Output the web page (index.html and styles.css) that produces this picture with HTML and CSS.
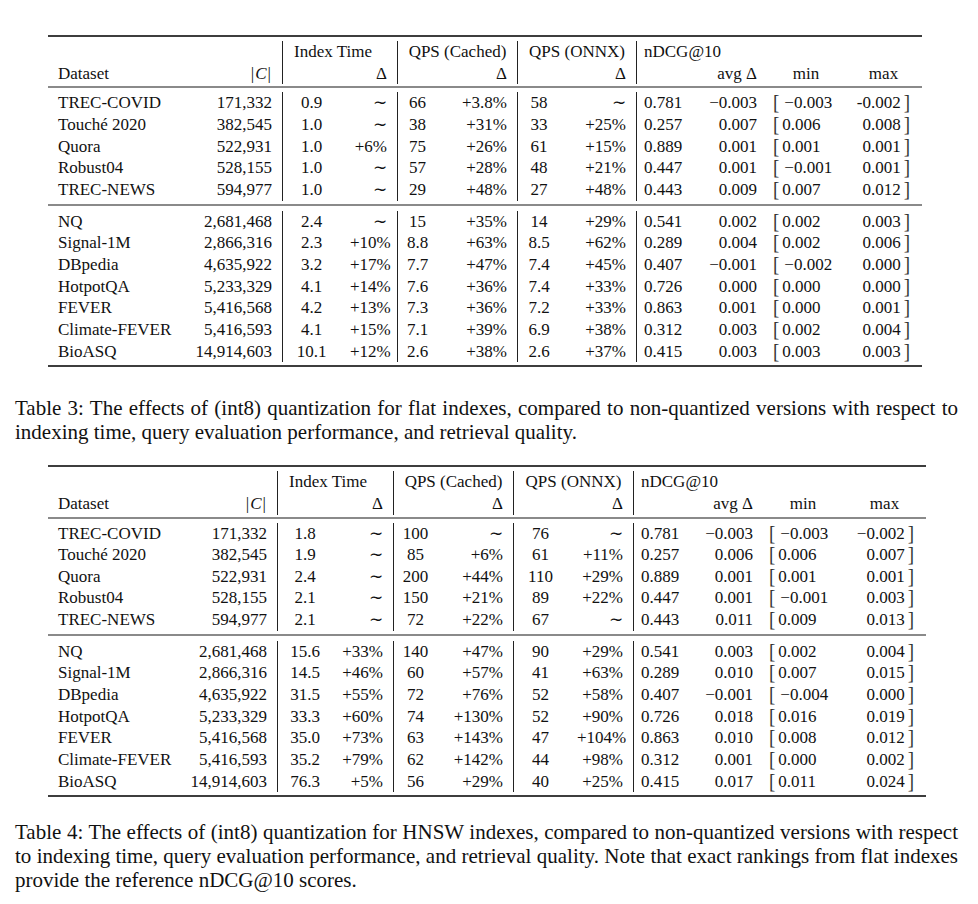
FILE: index.html
```html
<!DOCTYPE html>
<html>
<head>
<meta charset="utf-8">
<link rel="stylesheet" href="styles.css">
</head>
<body>
<div class="page">

<table class="qt t3">
  <colgroup>
    <col style="width:127px"><col style="width:107px">
    <col style="width:58px"><col style="width:57px">
    <col style="width:40px"><col style="width:80px">
    <col style="width:43px"><col style="width:76px">
    <col style="width:61px"><col style="width:70px"><col style="width:78px"><col style="width:77px">
  </colgroup>
  <tbody>
    <tr class="rule"><td colspan="12"><div class="line top"></div></td></tr>
    <tr class="hd">
      <td></td><td></td>
      <td colspan="2" class="vl grp-l">Index Time</td>
      <td colspan="2" class="vl c">QPS (Cached)</td>
      <td colspan="2" class="vl c">QPS (ONNX)</td>
      <td colspan="4" class="vl ndcg">nDCG@10</td>
    </tr>
    <tr class="hd">
      <td class="name">Dataset</td><td class="r"><span class="bar">|</span><i>C</i><span class="bar">|</span></td>
      <td class="vl"></td><td class="r">Δ</td>
      <td class="vl"></td><td class="r">Δ</td>
      <td class="vl"></td><td class="r">Δ</td>
      <td class="vl"></td><td class="r">avg Δ</td><td class="c">min</td><td class="c">max</td>
    </tr>
    <tr class="rule"><td colspan="12"><div class="line mid"></div></td></tr>

    <tr><td class="name">TREC-COVID</td><td class="r">171,332</td><td class="vl c">0.9</td><td class="r">∼</td><td class="vl c">66</td><td class="r">+3.8%</td><td class="vl c">58</td><td class="r">∼</td><td class="vl nv">0.781</td><td class="r">−0.003</td><td class="mn"><span class="br">[</span><span class="neg">−0.003</span></td><td class="mx">-0.002<span class="br rb">]</span></td></tr>
    <tr><td class="name">Touché 2020</td><td class="r">382,545</td><td class="vl c">1.0</td><td class="r">∼</td><td class="vl c">38</td><td class="r">+31%</td><td class="vl c">33</td><td class="r">+25%</td><td class="vl nv">0.257</td><td class="r">0.007</td><td class="mn"><span class="br">[</span>0.006</td><td class="mx">0.008<span class="br rb">]</span></td></tr>
    <tr><td class="name">Quora</td><td class="r">522,931</td><td class="vl c">1.0</td><td class="r">+6%</td><td class="vl c">75</td><td class="r">+26%</td><td class="vl c">61</td><td class="r">+15%</td><td class="vl nv">0.889</td><td class="r">0.001</td><td class="mn"><span class="br">[</span>0.001</td><td class="mx">0.001<span class="br rb">]</span></td></tr>
    <tr><td class="name">Robust04</td><td class="r">528,155</td><td class="vl c">1.0</td><td class="r">∼</td><td class="vl c">57</td><td class="r">+28%</td><td class="vl c">48</td><td class="r">+21%</td><td class="vl nv">0.447</td><td class="r">0.001</td><td class="mn"><span class="br">[</span><span class="neg">−0.001</span></td><td class="mx">0.001<span class="br rb">]</span></td></tr>
    <tr><td class="name">TREC-NEWS</td><td class="r">594,977</td><td class="vl c">1.0</td><td class="r">∼</td><td class="vl c">29</td><td class="r">+48%</td><td class="vl c">27</td><td class="r">+48%</td><td class="vl nv">0.443</td><td class="r">0.009</td><td class="mn"><span class="br">[</span>0.007</td><td class="mx">0.012<span class="br rb">]</span></td></tr>

    <tr class="rule"><td colspan="12"><div class="line mid2"></div></td></tr>

    <tr><td class="name">NQ</td><td class="r">2,681,468</td><td class="vl c">2.4</td><td class="r">∼</td><td class="vl c">15</td><td class="r">+35%</td><td class="vl c">14</td><td class="r">+29%</td><td class="vl nv">0.541</td><td class="r">0.002</td><td class="mn"><span class="br">[</span>0.002</td><td class="mx">0.003<span class="br rb">]</span></td></tr>
    <tr><td class="name">Signal-1M</td><td class="r">2,866,316</td><td class="vl c">2.3</td><td class="r">+10%</td><td class="vl c">8.8</td><td class="r">+63%</td><td class="vl c">8.5</td><td class="r">+62%</td><td class="vl nv">0.289</td><td class="r">0.004</td><td class="mn"><span class="br">[</span>0.002</td><td class="mx">0.006<span class="br rb">]</span></td></tr>
    <tr><td class="name">DBpedia</td><td class="r">4,635,922</td><td class="vl c">3.2</td><td class="r">+17%</td><td class="vl c">7.7</td><td class="r">+47%</td><td class="vl c">7.4</td><td class="r">+45%</td><td class="vl nv">0.407</td><td class="r">−0.001</td><td class="mn"><span class="br">[</span><span class="neg">−0.002</span></td><td class="mx">0.000<span class="br rb">]</span></td></tr>
    <tr><td class="name">HotpotQA</td><td class="r">5,233,329</td><td class="vl c">4.1</td><td class="r">+14%</td><td class="vl c">7.6</td><td class="r">+36%</td><td class="vl c">7.4</td><td class="r">+33%</td><td class="vl nv">0.726</td><td class="r">0.000</td><td class="mn"><span class="br">[</span>0.000</td><td class="mx">0.000<span class="br rb">]</span></td></tr>
    <tr><td class="name">FEVER</td><td class="r">5,416,568</td><td class="vl c">4.2</td><td class="r">+13%</td><td class="vl c">7.3</td><td class="r">+36%</td><td class="vl c">7.2</td><td class="r">+33%</td><td class="vl nv">0.863</td><td class="r">0.001</td><td class="mn"><span class="br">[</span>0.000</td><td class="mx">0.001<span class="br rb">]</span></td></tr>
    <tr><td class="name">Climate-FEVER</td><td class="r">5,416,593</td><td class="vl c">4.1</td><td class="r">+15%</td><td class="vl c">7.1</td><td class="r">+39%</td><td class="vl c">6.9</td><td class="r">+38%</td><td class="vl nv">0.312</td><td class="r">0.003</td><td class="mn"><span class="br">[</span>0.002</td><td class="mx">0.004<span class="br rb">]</span></td></tr>
    <tr><td class="name">BioASQ</td><td class="r">14,914,603</td><td class="vl c">10.1</td><td class="r">+12%</td><td class="vl c">2.6</td><td class="r">+38%</td><td class="vl c">2.6</td><td class="r">+37%</td><td class="vl nv">0.415</td><td class="r">0.003</td><td class="mn"><span class="br">[</span>0.003</td><td class="mx">0.003<span class="br rb">]</span></td></tr>

    <tr class="rule"><td colspan="12"><div class="line bottom"></div></td></tr>
  </tbody>
</table>

<p class="caption cap3">Table 3: The effects of (int8) quantization for flat indexes, compared to non-quantized versions with respect to indexing time, query evaluation performance, and retrieval quality.</p>

<table class="qt t4">
  <colgroup>
    <col style="width:122px"><col style="width:107px">
    <col style="width:55px"><col style="width:61px">
    <col style="width:44px"><col style="width:76px">
    <col style="width:54px"><col style="width:66px">
    <col style="width:62px"><col style="width:68px"><col style="width:80px"><col style="width:83px">
  </colgroup>
  <tbody>
    <tr class="rule"><td colspan="12"><div class="line top"></div></td></tr>
    <tr class="hd">
      <td></td><td></td>
      <td colspan="2" class="vl grp-l">Index Time</td>
      <td colspan="2" class="vl c">QPS (Cached)</td>
      <td colspan="2" class="vl c">QPS (ONNX)</td>
      <td colspan="4" class="vl ndcg">nDCG@10</td>
    </tr>
    <tr class="hd">
      <td class="name">Dataset</td><td class="r"><span class="bar">|</span><i>C</i><span class="bar">|</span></td>
      <td class="vl"></td><td class="r">Δ</td>
      <td class="vl"></td><td class="r">Δ</td>
      <td class="vl"></td><td class="r">Δ</td>
      <td class="vl"></td><td class="r">avg Δ</td><td class="c">min</td><td class="c">max</td>
    </tr>
    <tr class="rule"><td colspan="12"><div class="line mid"></div></td></tr>

    <tr><td class="name">TREC-COVID</td><td class="r">171,332</td><td class="vl c">1.8</td><td class="r">∼</td><td class="vl c">100</td><td class="r">∼</td><td class="vl c">76</td><td class="r">∼</td><td class="vl nv">0.781</td><td class="r">−0.003</td><td class="mn"><span class="br">[</span><span class="neg">−0.003</span></td><td class="mx">−0.002<span class="br rb">]</span></td></tr>
    <tr><td class="name">Touché 2020</td><td class="r">382,545</td><td class="vl c">1.9</td><td class="r">∼</td><td class="vl c">85</td><td class="r">+6%</td><td class="vl c">61</td><td class="r">+11%</td><td class="vl nv">0.257</td><td class="r">0.006</td><td class="mn"><span class="br">[</span>0.006</td><td class="mx">0.007<span class="br rb">]</span></td></tr>
    <tr><td class="name">Quora</td><td class="r">522,931</td><td class="vl c">2.4</td><td class="r">∼</td><td class="vl c">200</td><td class="r">+44%</td><td class="vl c">110</td><td class="r">+29%</td><td class="vl nv">0.889</td><td class="r">0.001</td><td class="mn"><span class="br">[</span>0.001</td><td class="mx">0.001<span class="br rb">]</span></td></tr>
    <tr><td class="name">Robust04</td><td class="r">528,155</td><td class="vl c">2.1</td><td class="r">∼</td><td class="vl c">150</td><td class="r">+21%</td><td class="vl c">89</td><td class="r">+22%</td><td class="vl nv">0.447</td><td class="r">0.001</td><td class="mn"><span class="br">[</span><span class="neg">−0.001</span></td><td class="mx">0.003<span class="br rb">]</span></td></tr>
    <tr><td class="name">TREC-NEWS</td><td class="r">594,977</td><td class="vl c">2.1</td><td class="r">∼</td><td class="vl c">72</td><td class="r">+22%</td><td class="vl c">67</td><td class="r">∼</td><td class="vl nv">0.443</td><td class="r">0.011</td><td class="mn"><span class="br">[</span>0.009</td><td class="mx">0.013<span class="br rb">]</span></td></tr>

    <tr class="rule"><td colspan="12"><div class="line mid2"></div></td></tr>

    <tr><td class="name">NQ</td><td class="r">2,681,468</td><td class="vl c">15.6</td><td class="r">+33%</td><td class="vl c">140</td><td class="r">+47%</td><td class="vl c">90</td><td class="r">+29%</td><td class="vl nv">0.541</td><td class="r">0.003</td><td class="mn"><span class="br">[</span>0.002</td><td class="mx">0.004<span class="br rb">]</span></td></tr>
    <tr><td class="name">Signal-1M</td><td class="r">2,866,316</td><td class="vl c">14.5</td><td class="r">+46%</td><td class="vl c">60</td><td class="r">+57%</td><td class="vl c">41</td><td class="r">+63%</td><td class="vl nv">0.289</td><td class="r">0.010</td><td class="mn"><span class="br">[</span>0.007</td><td class="mx">0.015<span class="br rb">]</span></td></tr>
    <tr><td class="name">DBpedia</td><td class="r">4,635,922</td><td class="vl c">31.5</td><td class="r">+55%</td><td class="vl c">72</td><td class="r">+76%</td><td class="vl c">52</td><td class="r">+58%</td><td class="vl nv">0.407</td><td class="r">−0.001</td><td class="mn"><span class="br">[</span><span class="neg">−0.004</span></td><td class="mx">0.000<span class="br rb">]</span></td></tr>
    <tr><td class="name">HotpotQA</td><td class="r">5,233,329</td><td class="vl c">33.3</td><td class="r">+60%</td><td class="vl c">74</td><td class="r">+130%</td><td class="vl c">52</td><td class="r">+90%</td><td class="vl nv">0.726</td><td class="r">0.018</td><td class="mn"><span class="br">[</span>0.016</td><td class="mx">0.019<span class="br rb">]</span></td></tr>
    <tr><td class="name">FEVER</td><td class="r">5,416,568</td><td class="vl c">35.0</td><td class="r">+73%</td><td class="vl c">63</td><td class="r">+143%</td><td class="vl c">47</td><td class="r">+104%</td><td class="vl nv">0.863</td><td class="r">0.010</td><td class="mn"><span class="br">[</span>0.008</td><td class="mx">0.012<span class="br rb">]</span></td></tr>
    <tr><td class="name">Climate-FEVER</td><td class="r">5,416,593</td><td class="vl c">35.2</td><td class="r">+79%</td><td class="vl c">62</td><td class="r">+142%</td><td class="vl c">44</td><td class="r">+98%</td><td class="vl nv">0.312</td><td class="r">0.001</td><td class="mn"><span class="br">[</span>0.000</td><td class="mx">0.002<span class="br rb">]</span></td></tr>
    <tr><td class="name">BioASQ</td><td class="r">14,914,603</td><td class="vl c">76.3</td><td class="r">+5%</td><td class="vl c">56</td><td class="r">+29%</td><td class="vl c">40</td><td class="r">+25%</td><td class="vl nv">0.415</td><td class="r">0.017</td><td class="mn"><span class="br">[</span>0.011</td><td class="mx">0.024<span class="br rb">]</span></td></tr>

    <tr class="rule"><td colspan="12"><div class="line bottom"></div></td></tr>
  </tbody>
</table>

<p class="caption cap4">Table 4: The effects of (int8) quantization for HNSW indexes, compared to non-quantized versions with respect to indexing time, query evaluation performance, and retrieval quality. Note that exact rankings from flat indexes provide the reference nDCG@10 scores.</p>

</div>
</body>
</html>
```

FILE: styles.css
```css
html, body {
  margin: 0;
  padding: 0;
  background: #ffffff;
}

body {
  font-family: "Liberation Serif", "Times New Roman", serif;
  color: #111111;
}

.page {
  padding: 35px 0 0 0;
}

.qt {
  border-collapse: separate;
  border-spacing: 0;
  table-layout: fixed;
  margin-left: 48px;
  font-size: 17px;
}

.t3 { width: 874px; }
.t4 { width: 878px; }

.qt td {
  padding: 0 10px;
  line-height: 21.65px;
  height: 21.65px;
  white-space: nowrap;
  vertical-align: middle;
}

.qt .rule td {
  padding: 0;
  height: auto;
  line-height: 0;
}

.line { width: 100%; }
.line.top { height: 2px; background: #3d3d3d; margin-bottom: 4px; }
.line.mid { height: 2px; background: #8a8a8a; margin: 2px 0 4px; }
.line.mid2 { height: 2px; background: #8a8a8a; margin: 3px 0 5px; }
.line.bottom { height: 2px; background: #3d3d3d; margin-top: 3px; }

.qt .vl { border-left: 1px solid #222222; }

.qt .name { text-align: left; }
.qt .r { text-align: right; }
.qt .c { text-align: center; padding: 0 2px; }
.qt .nv { text-align: left; padding-left: 7px; }
.qt .grp-l { text-align: left; padding-left: 11px; }
.qt .ndcg { text-align: left; padding-left: 7px; }
.qt .mn { text-align: left; padding-left: 6px; }
.qt .mx { text-align: right; padding-right: 12px; }

.br {
  display: inline-block;
  font-size: 19px;
  line-height: 1;
  color: #333333;
  margin-right: 3px;
  transform: scaleY(1.12);
}

.br.rb {
  margin-right: 0;
  margin-left: 3px;
}

.neg { margin-left: 2px; }

.bar { padding: 0 1px; }

.caption {
  margin: 29px 0 0 15px;
  width: 943px;
  font-size: 21px;
  line-height: 24px;
  text-align: justify;
}

.cap3 { margin-bottom: 21px; }
.cap4 { margin-top: 23px; }
```
